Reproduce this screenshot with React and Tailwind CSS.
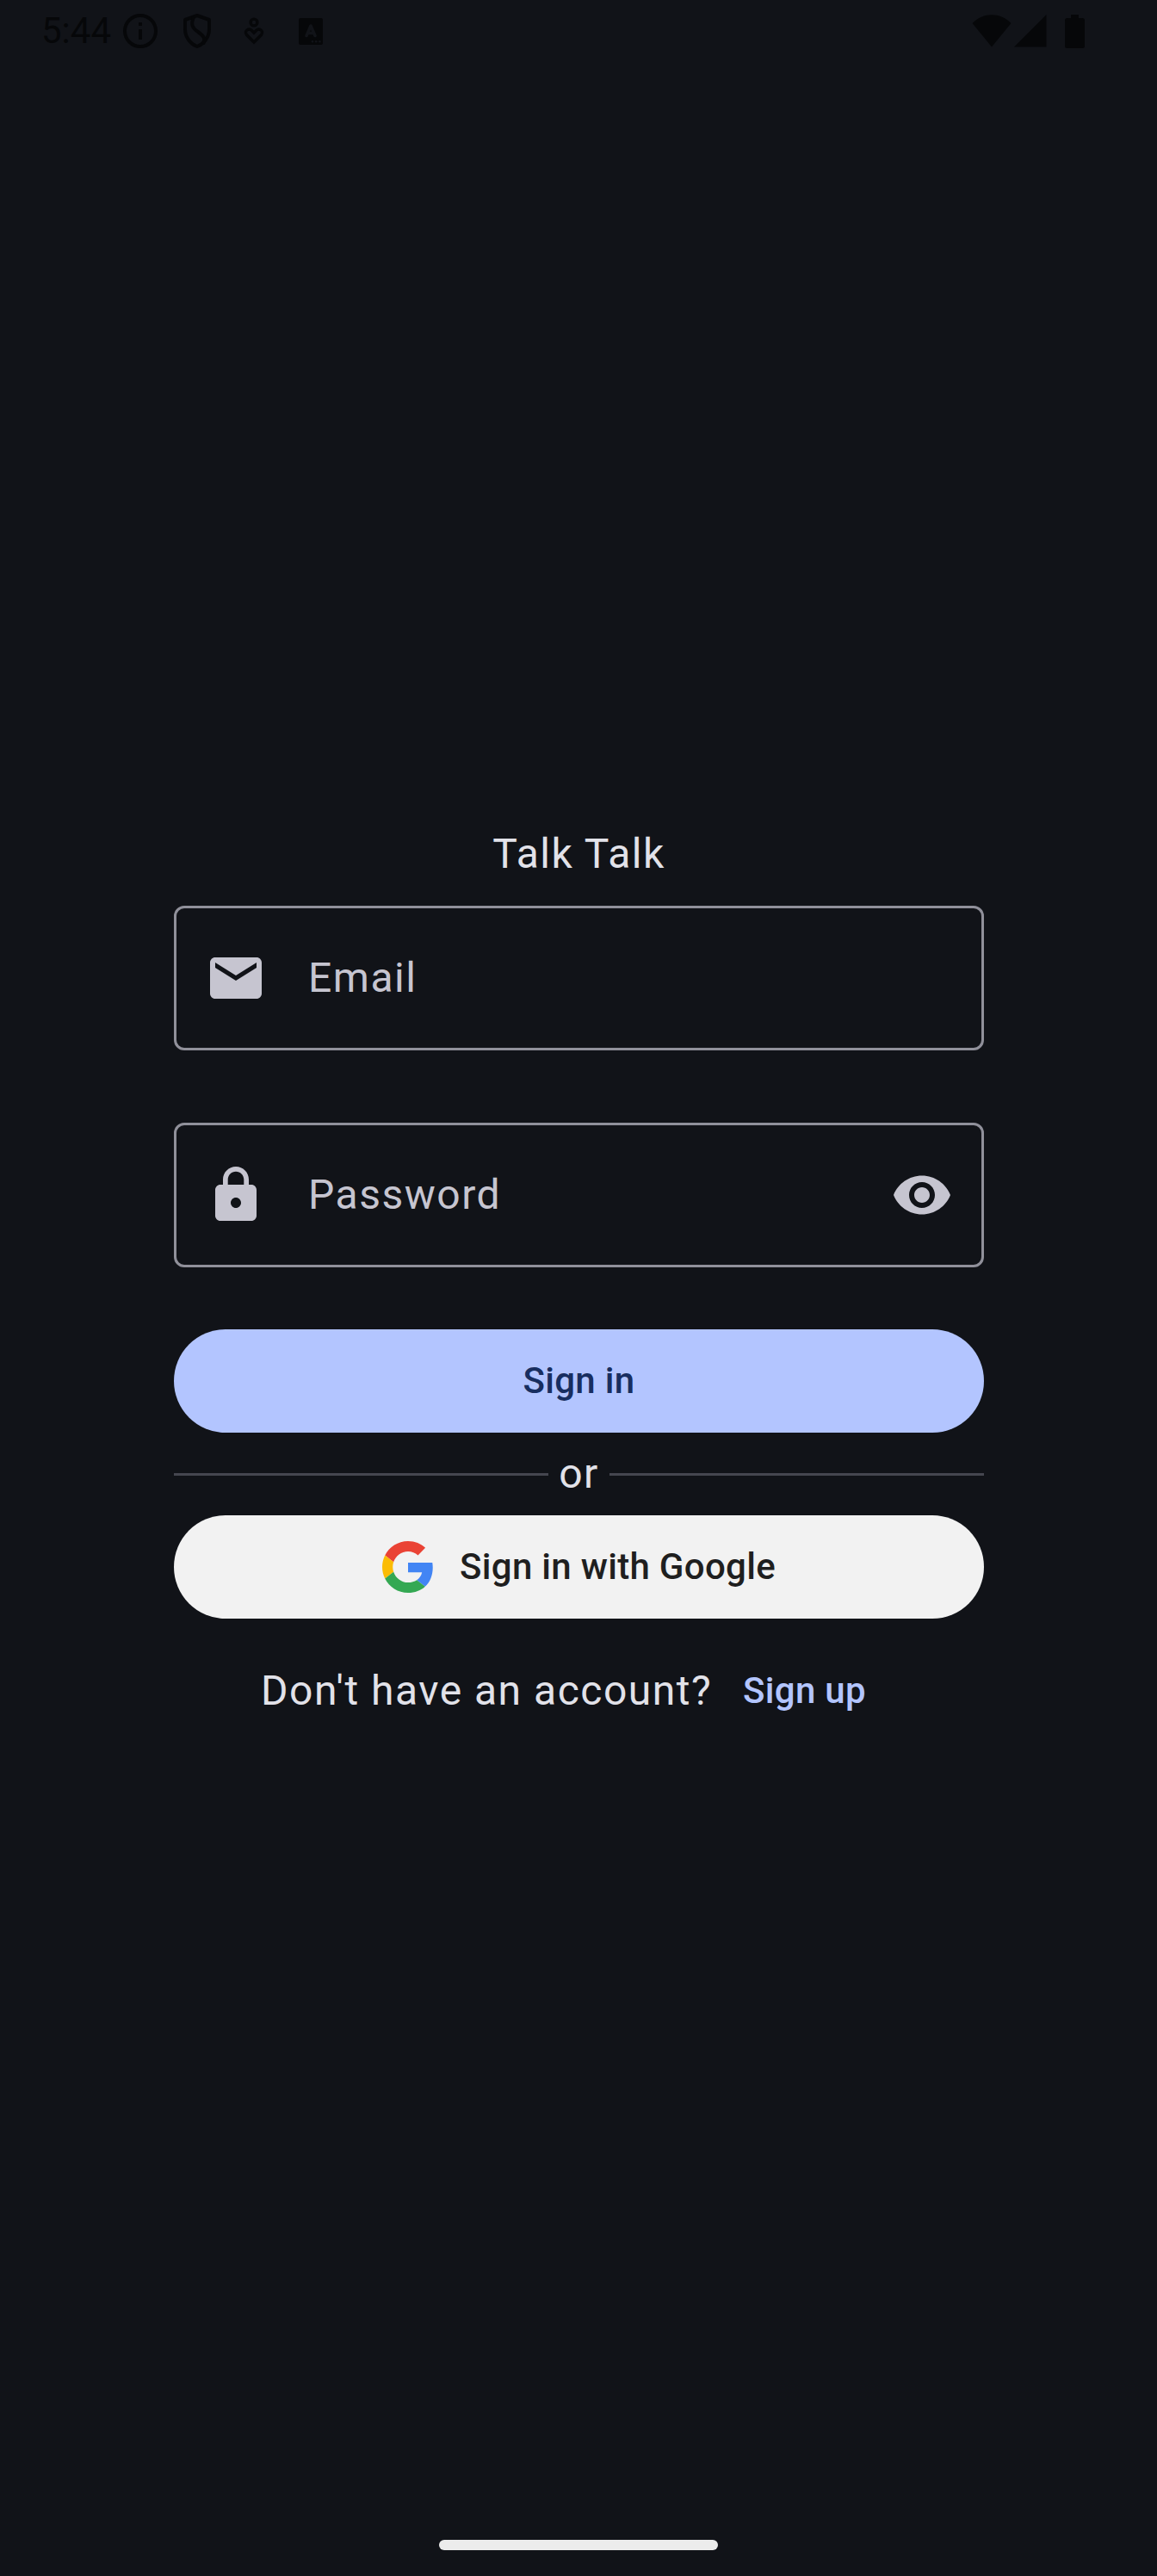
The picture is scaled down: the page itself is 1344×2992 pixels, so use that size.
const MAIL_ICON = "M20 4H4c-1.1 0-2 .9-2 2v12c0 1.1.9 2 2 2h16c1.1 0 2-.9 2-2V6c0-1.1-.9-2-2-2zm0 4l-8 5-8-5V6l8 5 8-5v2z";
const LOCK_ICON = "M18 8h-1V6c0-2.76-2.24-5-5-5S7 3.24 7 6v2H6c-1.1 0-2 .9-2 2v10c0 1.1.9 2 2 2h12c1.1 0 2-.9 2-2V10c0-1.1-.9-2-2-2zm-6 9c-1.1 0-2-.9-2-2s.9-2 2-2 2 .9 2 2-.9 2-2 2zm3.1-9H8.9V6c0-1.71 1.39-3.1 3.1-3.1 1.71 0 3.1 1.39 3.1 3.1v2z";
const EYE_ICON = "M12 4.5C7 4.5 2.73 7.61 1 12c1.73 4.39 6 7.5 11 7.5s9.27-3.11 11-7.5c-1.73-4.39-6-7.5-11-7.5zM12 17c-2.76 0-5-2.24-5-5s2.24-5 5-5 5 2.24 5 5-2.24 5-5 5zm0-8c-1.66 0-3 1.34-3 3s1.34 3 3 3 3-1.34 3-3-1.34-3-3-3z";

function FieldIcon({ d }) {
  return (
    <svg viewBox="0 0 24 24" className="size-[72px] shrink-0 fill-[#c6c5d0]">
      <path d={d} />
    </svg>
  );
}

function Field({ icon, label, trailing }) {
  return (
    <div className="flex h-[168px] w-full items-center rounded-[12px] border-[3px] border-[#90909a] px-[33px]">
      <FieldIcon d={icon} />
      <span className="ml-[48px] flex-1 text-[48px] leading-[72px] tracking-[1.5px] text-[#c6c5d0]">{label}</span>
      {trailing && <FieldIcon d={trailing} />}
    </div>
  );
}

function StatusBar() {
  return (
    <header className="flex h-[72px] items-center text-[#060709]">
      <span className="ml-[48px] w-[95px] text-[42px] leading-[48px]">5:44</span>
      <svg viewBox="0 0 40 40" className="size-[40px]" fill="none" stroke="currentColor" strokeWidth="4">
        <circle cx="20" cy="20" r="18" />
        <path d="M20 18v12M20 10v4" />
      </svg>
      <svg viewBox="0 0 34 40" className="ml-[29px] h-[40px] w-[34px]" fill="none" stroke="currentColor" strokeWidth="4" strokeLinejoin="round">
        <path d="M17 2 L31 7 V18 C31 27 25 35 17 38 C9 35 3 27 3 18 V7 Z" />
        <path d="M13 4 C9 13 12 17 18 21 C25 26 27 29 24 35" />
      </svg>
      <svg viewBox="0 0 24 32" className="ml-[37px] h-[32px] w-[24px]" fill="none" stroke="currentColor" strokeWidth="3.4">
        <circle cx="12" cy="6" r="3.9" />
        <path d="M12 29 L3.5 20.5 C0 16 6 12 9.5 15.5 L12 18 L14.5 15.5 C18 12 24 16 20.5 20.5 Z" />
      </svg>
      <svg viewBox="0 0 28 31" className="ml-[40px] h-[31px] w-[28px]">
        <rect width="28" height="31" rx="2" fill="currentColor" />
        <path d="M9 20.5 L14 9 L19 20.5 M10.5 17.5h7" fill="none" stroke="#111318" strokeWidth="3.6" strokeLinecap="round" strokeLinejoin="round" />
        <g fill="#111318">
          <circle cx="16" cy="27.3" r="1.3" />
          <circle cx="20.2" cy="27.3" r="1.3" />
          <circle cx="24.4" cy="27.3" r="1.3" />
        </g>
      </svg>
      <svg viewBox="0 0 46 38" className="ml-auto h-[38px] w-[46px]" fill="currentColor">
        <path d="M23 37.5 L.5 10 C13-3 33-3 45.5 10 Z" />
      </svg>
      <svg viewBox="0 0 38 38" className="ml-[3px] size-[38px]" fill="currentColor">
        <path d="M37.5 0V37.5H0Z" />
      </svg>
      <svg viewBox="0 0 23 39" className="mr-[84px] ml-[21px] h-[39px] w-[23px]" fill="currentColor">
        <path d="M7 0h9v4h4.5a2.5 2.5 0 0 1 2.5 2.5v30a2.5 2.5 0 0 1-2.5 2.5h-18a2.5 2.5 0 0 1-2.5-2.5v-30a2.5 2.5 0 0 1 2.5-2.5h4.5z" />
      </svg>
    </header>
  );
}

function GoogleLogo() {
  return (
    <svg viewBox="0 0 48 48" className="size-[60px]">
      <path fill="#EA4335" d="M24 9.5c3.54 0 6.71 1.22 9.21 3.6l6.85-6.85C35.9 2.38 30.47 0 24 0 14.62 0 6.51 5.38 2.56 13.22l7.98 6.19C12.43 13.72 17.74 9.5 24 9.5z" />
      <path fill="#4285F4" d="M46.98 24.55c0-1.57-.15-3.09-.38-4.55H24v9.02h12.94c-.58 2.96-2.26 5.48-4.78 7.18l7.73 6c4.51-4.18 7.09-10.36 7.09-17.65z" />
      <path fill="#FBBC05" d="M10.53 28.59c-.48-1.45-.76-2.99-.76-4.59s.27-3.14.76-4.59l-7.98-6.19C.92 16.46 0 20.12 0 24c0 3.88.92 7.54 2.56 10.78l7.97-6.19z" />
      <path fill="#34A853" d="M24 48c6.48 0 11.93-2.13 15.89-5.81l-7.73-6c-2.15 1.45-4.92 2.3-8.16 2.3-6.26 0-11.57-4.22-13.47-9.91l-7.98 6.19C6.51 42.62 14.62 48 24 48z" />
    </svg>
  );
}

export default function App() {
  return (
    <div className="flex h-[2992px] w-[1344px] flex-col bg-[#111318] font-['Roboto',sans-serif]">
      <StatusBar />
      <main className="ml-[202px] flex w-[941px] flex-1 flex-col items-center pt-[884px]">
        <h1 className="h-[96px] text-[48px] leading-[72px] tracking-[1.5px] text-[#e2e2e9]">Talk Talk</h1>
        <Field icon={MAIL_ICON} label="Email" />
        <div className="h-[84px]" />
        <Field icon={LOCK_ICON} label="Password" trailing={EYE_ICON} />
        <button className="mt-[72px] flex h-[120px] w-full items-center justify-center rounded-full bg-[#b3c5ff] text-[42px] leading-[60px] font-medium tracking-[0.3px] text-[#182e60]">
          Sign in
        </button>
        <div className="flex h-[96px] w-full items-center">
          <div className="h-[3px] flex-1 bg-[#45464f]" />
          <span className="mx-[12px] text-[48px] leading-[72px] tracking-[1.5px] text-[#e2e2e9]">or</span>
          <div className="h-[3px] flex-1 bg-[#45464f]" />
        </div>
        <button className="flex h-[120px] w-full items-center justify-center gap-[30px] rounded-full bg-[#f2f2f2] text-[42px] leading-[60px] font-medium tracking-[0.3px] text-[#1f1f1f]">
          <GoogleLogo />
          Sign in with Google
        </button>
        <div className="mt-[12px] flex h-[144px] items-center">
          <span className="text-[48px] leading-[72px] tracking-[1.5px] text-[#e2e2e9]">Don't have an account?</span>
          <button className="px-[36px] text-[42px] leading-[60px] font-medium tracking-[0.3px] text-[#b3c5ff]">Sign up</button>
        </div>
      </main>
      <footer className="flex h-[42px] justify-center">
        <div className="h-[12px] w-[324px] rounded-full bg-[#ececec]" />
      </footer>
    </div>
  );
}
